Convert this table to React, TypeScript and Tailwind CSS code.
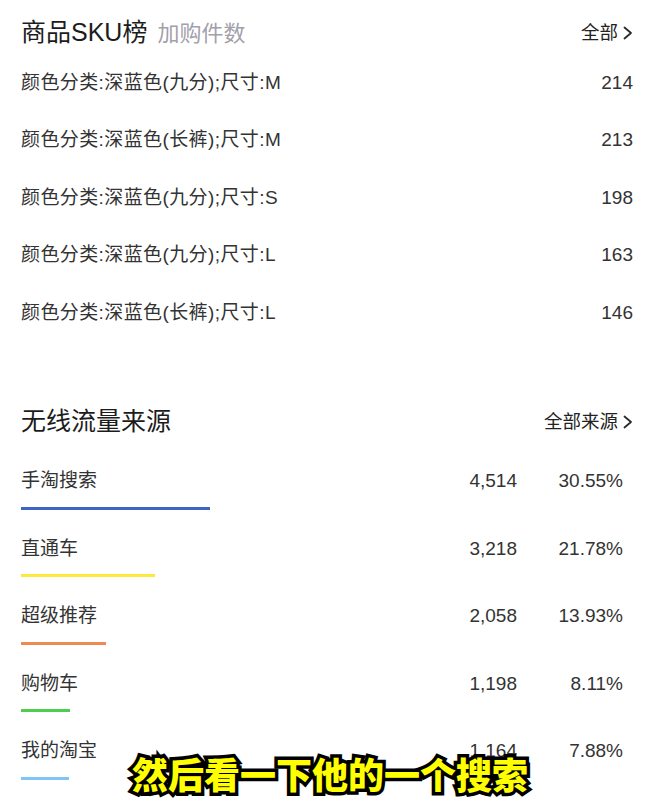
const skuRows = [
  { name: "颜色分类:深蓝色(九分);尺寸:M", count: 214 },
  { name: "颜色分类:深蓝色(长裤);尺寸:M", count: 213 },
  { name: "颜色分类:深蓝色(九分);尺寸:S", count: 198 },
  { name: "颜色分类:深蓝色(九分);尺寸:L", count: 163 },
  { name: "颜色分类:深蓝色(长裤);尺寸:L", count: 146 },
]

const sources = [
  { name: "手淘搜索", value: "4,514", pct: "30.55%", bar: "w-[189px] bg-[#3b64c6]" },
  { name: "直通车", value: "3,218", pct: "21.78%", bar: "w-[134px] bg-[#fde83c]" },
  { name: "超级推荐", value: "2,058", pct: "13.93%", bar: "w-[85px] bg-[#ef8a52]" },
  { name: "购物车", value: "1,198", pct: "8.11%", bar: "w-[49px] bg-[#4ccf4f]" },
  { name: "我的淘宝", value: "1,164", pct: "7.88%", bar: "w-[48px] bg-[#7fc4f4]" },
]

const Chevron = () => (
  <svg width="10" height="14" viewBox="0 0 10 14" className="ml-[5px]">
    <polyline points="1.5,1.5 8,7 1.5,12.5" fill="none" stroke="#2a2a2a" strokeWidth="1.8" strokeLinecap="round" strokeLinejoin="round" />
  </svg>
)

export default function App() {
  return (
    <div className="relative w-[648px] h-[806px] overflow-hidden bg-white text-[#333] font-['Liberation_Sans','Noto_Sans_CJK_SC',sans-serif]">
      {/* SKU ranking */}
      <div className="pl-[21px] pr-[15px] pt-[16px]">
        <div className="flex items-center justify-between h-[34px]">
          <div className="flex items-baseline">
            <span className="text-[25px] text-[#1c1c1c]">商品SKU榜</span>
            <span className="ml-[10px] text-[22px] text-[#a39fab]">加购件数</span>
          </div>
          <div className="flex items-center text-[18.5px] text-[#222]">
            全部
            <Chevron />
          </div>
        </div>
        <div className="mt-[4px]">
          {skuRows.map((r) => (
            <div key={r.name + r.count} className="flex items-center justify-between h-[57.5px] text-[19px]">
              <span className="tracking-[0.4px]">{r.name}</span>
              <span>{r.count}</span>
            </div>
          ))}
        </div>
      </div>

      {/* wireless traffic sources */}
      <div className="pl-[21px] pr-[15px] mt-[63px]">
        <div className="flex items-center justify-between h-[34px]">
          <span className="text-[25px] text-[#1c1c1c]">无线流量来源</span>
          <div className="flex items-center text-[18.5px] text-[#222]">
            全部来源
            <Chevron />
          </div>
        </div>
        <div className="mt-[29px]">
          {sources.map((s) => (
            <div key={s.name} className="h-[67.5px]">
              <div className="flex items-center h-[28px] text-[19px] pr-[10px]">
                <span className="flex-1">{s.name}</span>
                <span className="w-[90px] text-right">{s.value}</span>
                <span className="w-[106px] text-right">{s.pct}</span>
              </div>
              <div className={`mt-[11px] h-[3px] ${s.bar}`} />
            </div>
          ))}
        </div>
      </div>

      {/* video subtitle overlay */}
      <div className="absolute left-0 right-0 top-[748px] flex justify-center pl-[12px]">
        <span className="text-[36px] leading-[50px] font-black text-[#ffff00] [-webkit-text-stroke:7px_#000] [paint-order:stroke_fill] font-['Noto_Sans_CJK_SC',sans-serif]">
          然后看一下他的一个搜索
        </span>
      </div>
    </div>
  )
}
